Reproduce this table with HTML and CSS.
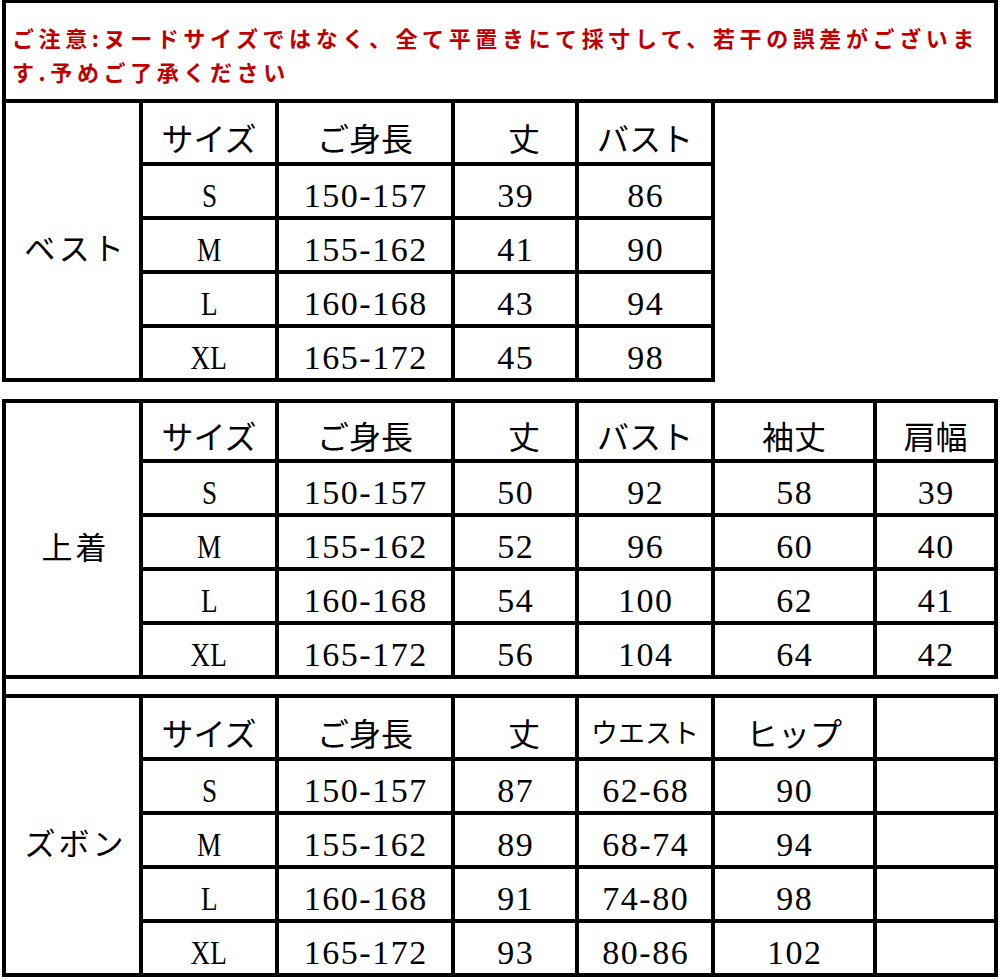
FILE: index.html
```html
<!DOCTYPE html>
<html lang="ja">
<head>
<meta charset="utf-8">
<title>サイズ表</title>
<link rel="stylesheet" href="styles.css">
</head>
<body>
<div class="page">
  <div class="notice">
    <span class="line">ご注意:ヌードサイズではなく、全て平置きにて採寸して、若干の誤差がございま</span>
    <span class="line">す.予めご了承ください</span>
  </div>

  <div class="tbl tbl-vest">
    <div class="cell cat">ベスト</div>
    <div class="cell hd">サイズ</div>
    <div class="cell hd">ご身長</div>
    <div class="cell hd shift">丈</div>
    <div class="cell hd">バスト</div>

    <div class="cell sz"><span>S</span></div>
    <div class="cell num">150-157</div>
    <div class="cell num">39</div>
    <div class="cell num">86</div>

    <div class="cell sz"><span>M</span></div>
    <div class="cell num">155-162</div>
    <div class="cell num">41</div>
    <div class="cell num">90</div>

    <div class="cell sz"><span>L</span></div>
    <div class="cell num">160-168</div>
    <div class="cell num">43</div>
    <div class="cell num">94</div>

    <div class="cell sz"><span>XL</span></div>
    <div class="cell num">165-172</div>
    <div class="cell num">45</div>
    <div class="cell num">98</div>
  </div>

  <div class="tbl tbl-wide tbl-top">
    <div class="cell cat">上着</div>
    <div class="cell hd">サイズ</div>
    <div class="cell hd">ご身長</div>
    <div class="cell hd shift">丈</div>
    <div class="cell hd">バスト</div>
    <div class="cell hd">袖丈</div>
    <div class="cell hd">肩幅</div>

    <div class="cell sz"><span>S</span></div>
    <div class="cell num">150-157</div>
    <div class="cell num">50</div>
    <div class="cell num">92</div>
    <div class="cell num">58</div>
    <div class="cell num">39</div>

    <div class="cell sz"><span>M</span></div>
    <div class="cell num">155-162</div>
    <div class="cell num">52</div>
    <div class="cell num">96</div>
    <div class="cell num">60</div>
    <div class="cell num">40</div>

    <div class="cell sz"><span>L</span></div>
    <div class="cell num">160-168</div>
    <div class="cell num">54</div>
    <div class="cell num">100</div>
    <div class="cell num">62</div>
    <div class="cell num">41</div>

    <div class="cell sz"><span>XL</span></div>
    <div class="cell num">165-172</div>
    <div class="cell num">56</div>
    <div class="cell num">104</div>
    <div class="cell num">64</div>
    <div class="cell num">42</div>
  </div>

  <div class="spacer"></div>

  <div class="tbl tbl-wide tbl-pants">
    <div class="cell cat">ズボン</div>
    <div class="cell hd">サイズ</div>
    <div class="cell hd">ご身長</div>
    <div class="cell hd shift">丈</div>
    <div class="cell hd small">ウエスト</div>
    <div class="cell hd">ヒップ</div>
    <div class="cell"></div>

    <div class="cell sz"><span>S</span></div>
    <div class="cell num">150-157</div>
    <div class="cell num">87</div>
    <div class="cell num">62-68</div>
    <div class="cell num">90</div>
    <div class="cell"></div>

    <div class="cell sz"><span>M</span></div>
    <div class="cell num">155-162</div>
    <div class="cell num">89</div>
    <div class="cell num">68-74</div>
    <div class="cell num">94</div>
    <div class="cell"></div>

    <div class="cell sz"><span>L</span></div>
    <div class="cell num">160-168</div>
    <div class="cell num">91</div>
    <div class="cell num">74-80</div>
    <div class="cell num">98</div>
    <div class="cell"></div>

    <div class="cell sz"><span>XL</span></div>
    <div class="cell num">165-172</div>
    <div class="cell num">93</div>
    <div class="cell num">80-86</div>
    <div class="cell num">102</div>
    <div class="cell"></div>
  </div>
</div>
</body>
</html>
```

FILE: styles.css
```css
html, body {
  margin: 0;
  padding: 0;
  background: #fff;
}

.page {
  width: 1000px;
  padding-left: 2px;
  box-sizing: border-box;
}

.notice {
  box-sizing: border-box;
  width: 996px;
  height: 103px;
  border: 4px solid #000;
  border-top-width: 3px;
  padding: 17px 0 0 6px;
  font-family: "Noto Sans CJK JP", sans-serif;
  font-weight: 700;
  font-size: 22px;
  line-height: 34px;
  letter-spacing: 4.6px;
  color: #c00000;
}

.notice .line {
  display: block;
  white-space: nowrap;
}

.tbl {
  display: grid;
  gap: 4px;
  background: #000;
  border: 4px solid #000;
  width: max-content;
  grid-template-columns: 133px 132px 172px 120px 132px;
  grid-template-rows: 59px repeat(4, 50px);
}

.tbl-vest {
  border-top: 0;
}

.tbl-wide {
  grid-template-columns: 133px 132px 172px 120px 132px 158px 117px;
}

.tbl-top {
  margin-top: 17px;
  grid-template-rows: 56px repeat(4, 50px);
}

.spacer {
  height: 15px;
  border-left: 4px solid #000;
}

.cell {
  background: #fff;
  display: flex;
  align-items: center;
  justify-content: center;
  color: #000;
  padding-top: 8px;
  box-sizing: border-box;
  white-space: nowrap;
}

.cat {
  grid-row: span 5;
  font-family: "Noto Sans CJK JP", sans-serif;
  font-size: 31px;
  padding-top: 12px;
  padding-left: 6px;
  letter-spacing: 3px;
}

.hd {
  font-family: "Noto Sans CJK JP", sans-serif;
  font-size: 32px;
  line-height: 40px;
}

.hd.small {
  font-size: 27px;
}

.hd.shift {
  padding-left: 18px;
}

.num,
.sz {
  font-family: "Liberation Serif", "Times New Roman", serif;
  font-size: 34px;
  line-height: 40px;
  padding-top: 10px;
}

.num {
  letter-spacing: 1.5px;
  padding-left: 1.5px;
}

.sz span {
  display: inline-block;
  transform: scaleX(0.8);
}
```
